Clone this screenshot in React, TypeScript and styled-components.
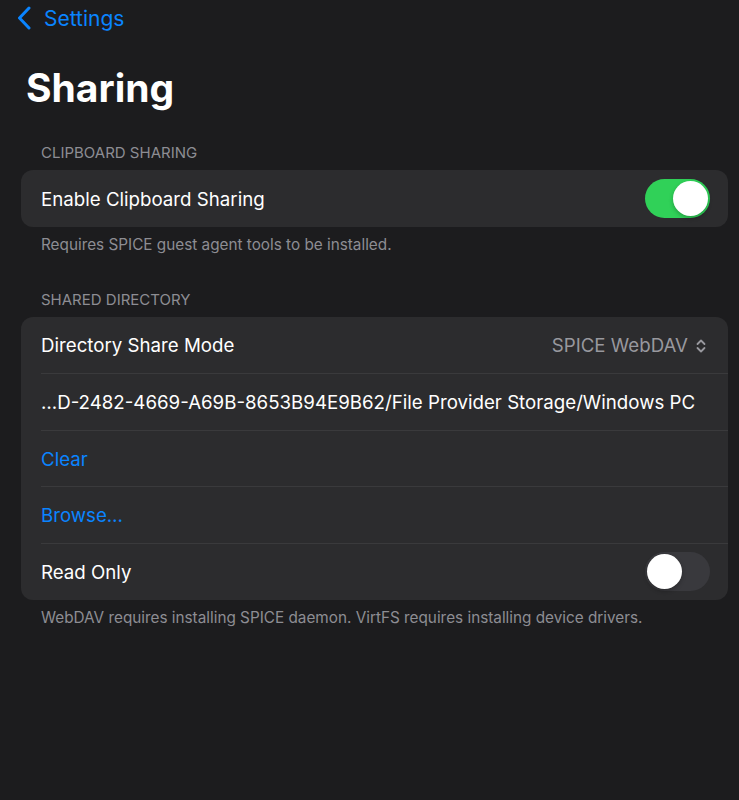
import React from "react";
import styled, { createGlobalStyle } from "styled-components";

const Global = createGlobalStyle`
  html, body { margin: 0; padding: 0; background: #1c1c1e; }
  body { font-family: Inter, "Noto Sans", sans-serif; -webkit-font-smoothing: antialiased; }
`;

const Page = styled.div`
  width: 739px;
  min-height: 800px;
  background: #1c1c1e;
  box-sizing: border-box;
  padding: 0 11px 0 21px;
`;

const NavBar = styled.div`
  height: 36px;
  display: flex;
  align-items: center;
  gap: 13px;
  margin-left: -4px;
  color: #0a84ff;
  font-size: 21px;
`;

const Title = styled.h1`
  margin: 30px 0 0 5px;
  color: #fff;
  font-size: 39px;
  font-weight: 700;
  line-height: 44px;
`;

const SectionHeader = styled.div<{ $top: number }>`
  margin-top: ${(p) => p.$top}px;
  padding-left: 20px;
  color: #8d8d93;
  font-size: 15px;
  line-height: 18px;
`;

const Card = styled.div`
  margin-top: 8px;
  background: #2c2c2e;
  border-radius: 12px;
  overflow: hidden;
`;

const Row = styled.div`
  height: 56.6px;
  box-sizing: border-box;
  display: flex;
  align-items: center;
  justify-content: space-between;
  padding: 2px 18px 0 20px;
  position: relative;
  & + &::before {
    content: "";
    position: absolute;
    top: 0;
    left: 20px;
    right: 0;
    height: 1px;
    background: #3a3a3c;
  }
`;

const Label = styled.span<{ $blue?: boolean }>`
  color: ${(p) => (p.$blue ? "#0a84ff" : "#ffffff")};
  font-size: 18.7px;
  white-space: nowrap;
`;

const Value = styled.span`
  display: flex;
  align-items: center;
  gap: 8px;
  margin-right: 4px;
  color: #98989e;
  font-size: 18.7px;
`;

const Footer = styled.div`
  margin-top: 9px;
  padding-left: 20px;
  color: #8d8d93;
  font-size: 15.3px;
  line-height: 18px;
`;

const Track = styled.div<{ $on: boolean }>`
  width: 65px;
  height: 39px;
  margin-top: -2px;
  border-radius: 20px;
  background: ${(p) => (p.$on ? "#30d158" : "#39393d")};
  display: flex;
  align-items: center;
  justify-content: ${(p) => (p.$on ? "flex-end" : "flex-start")};
  padding: 0 2px;
  box-sizing: border-box;
`;

const Knob = styled.div`
  width: 35px;
  height: 35px;
  border-radius: 50%;
  background: #fff;
  box-shadow: 0 2px 4px rgba(0, 0, 0, 0.25);
`;

const Toggle = ({ on }: { on: boolean }) => (
  <Track $on={on}>
    <Knob />
  </Track>
);

export default function App() {
  return (
    <>
      <Global />
      <Page>
        <NavBar>
          <svg width="14" height="24" viewBox="0 0 14 24" fill="none">
            <path d="M12 2 L2.5 12 L12 22" stroke="#0a84ff" strokeWidth="3" strokeLinecap="round" strokeLinejoin="round" />
          </svg>
          <span>Settings</span>
        </NavBar>
        <Title>Sharing</Title>
        <SectionHeader $top={34}>CLIPBOARD SHARING</SectionHeader>
        <Card>
          <Row>
            <Label>Enable Clipboard Sharing</Label>
            <Toggle on={true} />
          </Row>
        </Card>
        <Footer>Requires SPICE guest agent tools to be installed.</Footer>
        <SectionHeader $top={37}>SHARED DIRECTORY</SectionHeader>
        <Card>
          <Row>
            <Label>Directory Share Mode</Label>
            <Value>
              SPICE WebDAV
              <svg width="10" height="16" viewBox="0 0 10 16" fill="none">
                <path d="M1.5 6 L5 2.5 L8.5 6 M1.5 10 L5 13.5 L8.5 10" stroke="#98989e" strokeWidth="1.8" strokeLinecap="round" strokeLinejoin="round" />
              </svg>
            </Value>
          </Row>
          <Row>
            <Label>…D-2482-4669-A69B-8653B94E9B62/File Provider Storage/Windows PC</Label>
          </Row>
          <Row>
            <Label $blue>Clear</Label>
          </Row>
          <Row>
            <Label $blue>Browse…</Label>
          </Row>
          <Row>
            <Label>Read Only</Label>
            <Toggle on={false} />
          </Row>
        </Card>
        <Footer>WebDAV requires installing SPICE daemon. VirtFS requires installing device drivers.</Footer>
      </Page>
    </>
  );
}
